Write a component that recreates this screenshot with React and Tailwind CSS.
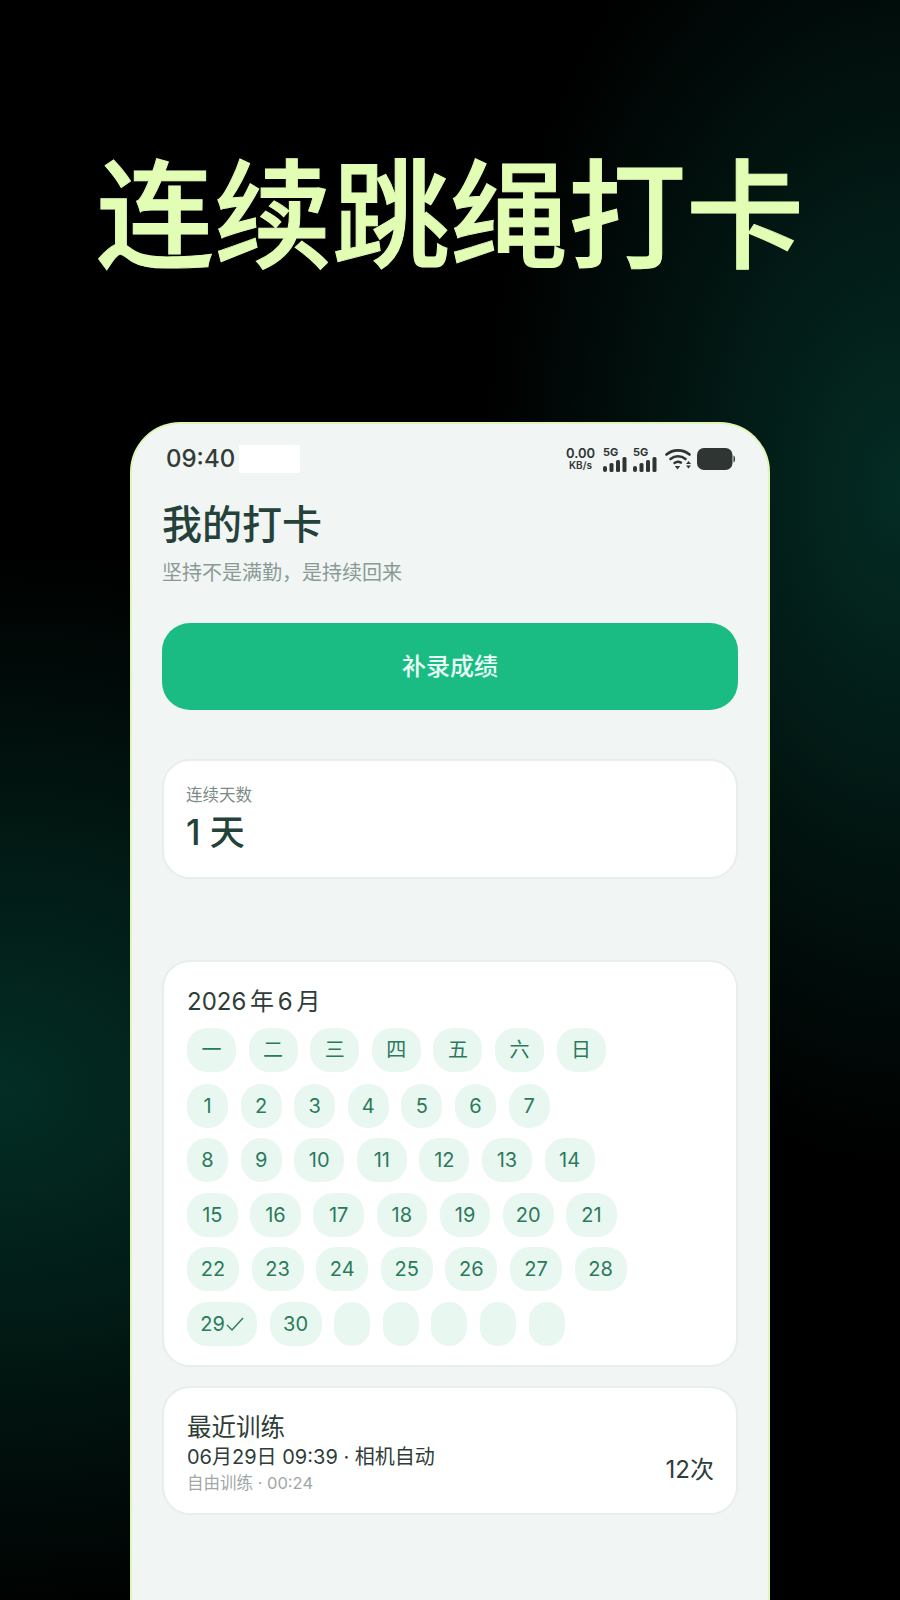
import React from 'react';

const weekDays = ['一', '二', '三', '四', '五', '六', '日'];
const weeks = [
  { days: ['1', '2', '3', '4', '5', '6', '7'], width: 'w-[41px]' },
  { days: ['8', '9', '10', '11', '12', '13', '14'], width: 'w-[50px]' },
  { days: ['15', '16', '17', '18', '19', '20', '21'], width: 'w-[50.6px]' },
  { days: ['22', '23', '24', '25', '26', '27', '28'], width: 'w-[52px]' },
];

// little signal bars next to the 5G label
const SignalBars = () => (
  <svg width="24" height="15" viewBox="0 0 24 15" fill="#2f3533">
    <rect x="0" y="9" width="4" height="6" rx="2" />
    <rect x="6.5" y="6" width="4" height="9" rx="1.5" />
    <rect x="13" y="3" width="4" height="12" rx="1.5" />
    <rect x="19.5" y="0" width="4" height="15" rx="1.5" />
  </svg>
);

const Network = () => (
  <div className="flex flex-col items-start">
    <span className="text-[11px] leading-[10px] font-bold text-[#2f3533]">5G</span>
    <SignalBars />
  </div>
);

const Wifi = () => (
  <svg width="27" height="22" viewBox="0 0 27 22" fill="none">
    <path d="M1.5 6.5C8 1 18 1 24.5 6.5" stroke="#2f3533" strokeWidth="2.6" strokeLinecap="round" />
    <path d="M5.5 11C10 7.4 16 7.4 20.5 11" stroke="#2f3533" strokeWidth="2.6" strokeLinecap="round" />
    <path d="M9.5 15C11.6 13.4 14 13.4 16 14.6" stroke="#2f3533" strokeWidth="2.4" strokeLinecap="round" />
    <path d="M9.8 18H15.2L12.5 21.5Z" fill="#2f3533" />
    <path d="M23.5 13L26 16H21Z" fill="#2f3533" />
    <path d="M21 17.5H26L23.5 20.5Z" fill="#2f3533" />
  </svg>
);

const Battery = () => (
  <svg width="38" height="22" viewBox="0 0 38 22" fill="#2f3533">
    <rect x="0" y="0" width="35.5" height="22" rx="7" />
    <path d="M36.5 7.5C37.6 8 38 9 38 11C38 13 37.6 14 36.5 14.5Z" />
  </svg>
);

const Chip = ({ children, className = '' }) => (
  <div className={`h-[44px] rounded-[20px] bg-[#e9f7f1] flex items-center justify-center text-[20px] text-[#2b7a5c] ${className}`}>
    {children}
  </div>
);

const Card = ({ children, className = '' }) => (
  <div className={`mx-[30px] bg-white rounded-[28px] border-2 border-[#e7eeeb] ${className}`}>{children}</div>
);

export default function App() {
  return (
    <div className="font-['Inter','Noto_Sans_CJK_SC',sans-serif] relative h-[1600px] w-[900px] overflow-hidden bg-black bg-[radial-gradient(ellipse_680px_540px_at_0px_1090px,#032e25,transparent),radial-gradient(ellipse_420px_680px_at_900px_490px,#042c24,transparent)]">
      <h1 className="h-[422px] pt-[138px] text-center text-[118px] leading-[156px] font-medium text-[#e2fdb4] [-webkit-text-stroke:1px_#e2fdb4]">连续跳绳打卡</h1>

      <div className="mx-[130px] h-[1178px] rounded-t-[50px] border-2 border-b-0 border-[#dff6b6] bg-[#f1f5f4]">
        <div className="flex items-center justify-between pt-[20px] pl-[34px] pr-[33px] h-[50px]">
          <div className="flex items-center">
            <span className="text-[24px] leading-[28px] font-medium text-[#333b38]">09:40</span>
            <div className="ml-[4px] w-[61px] h-[28px] bg-white"></div>
          </div>
          <div className="flex items-center">
            <div className="flex flex-col items-center w-[29px] mr-[8px] font-semibold text-[#2f3533]">
              <span className="text-[13px] leading-[13px]">0.00</span>
              <span className="text-[10px] leading-[11px]">KB/s</span>
            </div>
            <Network />
            <div className="w-[6px]"></div>
            <Network />
            <div className="w-[8px]"></div>
            <Wifi />
            <div className="w-[5px]"></div>
            <Battery />
          </div>
        </div>

        <div className="pl-[30px] pt-[23px]">
          <h2 className="text-[40px] leading-[56px] font-medium text-[#24423a]">我的打卡</h2>
          <p className="mt-[6px] text-[20px] leading-[28px] text-[#8a9a94]">坚持不是满勤，是持续回来</p>
        </div>

        <div className="mx-[30px] mt-[36px] h-[87px] rounded-[28px] bg-[#1abc84] flex items-center justify-center text-[24px] font-medium text-[#eafff6]">
          补录成绩
        </div>

        <Card className="mt-[49px] h-[120px] pl-[22px] pt-[23px]">
          <div className="text-[16.5px] leading-[22px] text-[#7c8b86]">连续天数</div>
          <div className="text-[35px] leading-[52px] font-medium text-[#24423a]">1 天</div>
        </Card>

        <Card className="mt-[81px] h-[407px] pl-[23px] pt-[23px]">
          <div className="text-[24px] leading-[34px] text-[#2f3d38] [word-spacing:-3px]">2026 年 6 月</div>
          <div className="mt-[9px] flex gap-[12.6px]">
            {weekDays.map(d => <Chip key={d} className="w-[49px]">{d}</Chip>)}
          </div>
          {weeks.map((week, i) => (
            <div key={i} className={`flex gap-[12.6px] ${i === 0 ? 'mt-[11.5px]' : 'mt-[10.6px]'}`}>
              {week.days.map(d => <Chip key={d} className={d.length === 1 ? 'w-[41px]' : week.width}>{d}</Chip>)}
            </div>
          ))}
          <div className="mt-[10.6px] flex gap-[12.6px]">
            <Chip className="w-[70px]">
              29
              <svg width="18" height="16" viewBox="0 0 18 16" fill="none" className="ml-[1px]">
                <path d="M1 9L6 14L17 2" stroke="#2b7a5c" strokeWidth="1.4" />
              </svg>
            </Chip>
            <Chip className="w-[52px]">30</Chip>
            {[0, 1, 2, 3, 4].map(i => <Chip key={i} className="w-[36px]" />)}
          </div>
        </Card>

        <Card className="mt-[19px] h-[129px] pl-[23px] pr-[22px] flex items-center justify-between">
          <div className="mt-[4px]">
            <div className="text-[24.5px] leading-[34px] text-[#2f3d38]">最近训练</div>
            <div className="text-[20px] leading-[26px] text-[#2f3d38]">06月29日 09:39 · 相机自动</div>
            <div className="text-[16.5px] leading-[26px] text-[#a0a8a5]">自由训练 · 00:24</div>
          </div>
          <div className="mt-[38px] text-[24px] text-[#2f3d38]">12次</div>
        </Card>
      </div>
    </div>
  );
}
